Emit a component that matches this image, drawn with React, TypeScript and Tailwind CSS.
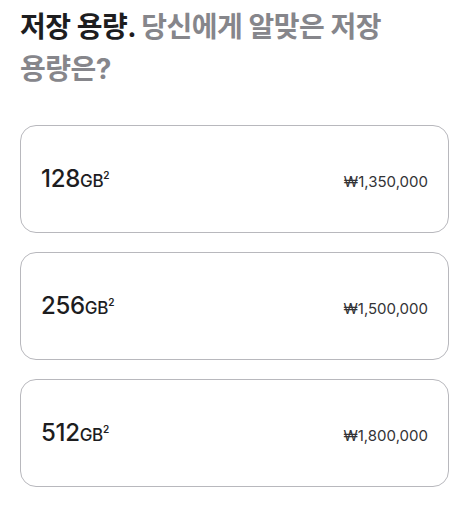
const options = [
  { size: "128", price: "₩1,350,000" },
  { size: "256", price: "₩1,500,000" },
  { size: "512", price: "₩1,800,000" },
];

export default function App() {
  return (
    <div className="min-h-screen bg-white pl-5 pr-6 pt-[6px] font-['Inter','Noto_Sans_CJK_KR',sans-serif]">
      <h2 className="max-w-[400px] break-keep text-[28px] font-bold leading-[42px] tracking-[-0.5px] text-[#1d1d1f]">
        저장 용량. <span className="text-[#86868b]">당신에게 알맞은 저장 용량은?</span>
      </h2>

      <div className="mt-[35px] flex flex-col gap-[19px]">
        {options.map((o) => (
          <div
            key={o.size}
            className="flex h-[108px] items-center rounded-[16px] border border-[#b8b8bd] px-5"
          >
            <div className="flex w-full items-baseline justify-between">
              <span className="text-[24px] font-medium tracking-[-0.3px] text-[#1d1d1f]">
                {o.size}
                <span className="text-[17px]">GB</span>
                <sup className="top-[-0.8em] text-[10px] font-semibold">2</sup>
              </span>
              <span className="text-[15px] text-[#333336]">{o.price}</span>
            </div>
          </div>
        ))}
      </div>
    </div>
  );
}
